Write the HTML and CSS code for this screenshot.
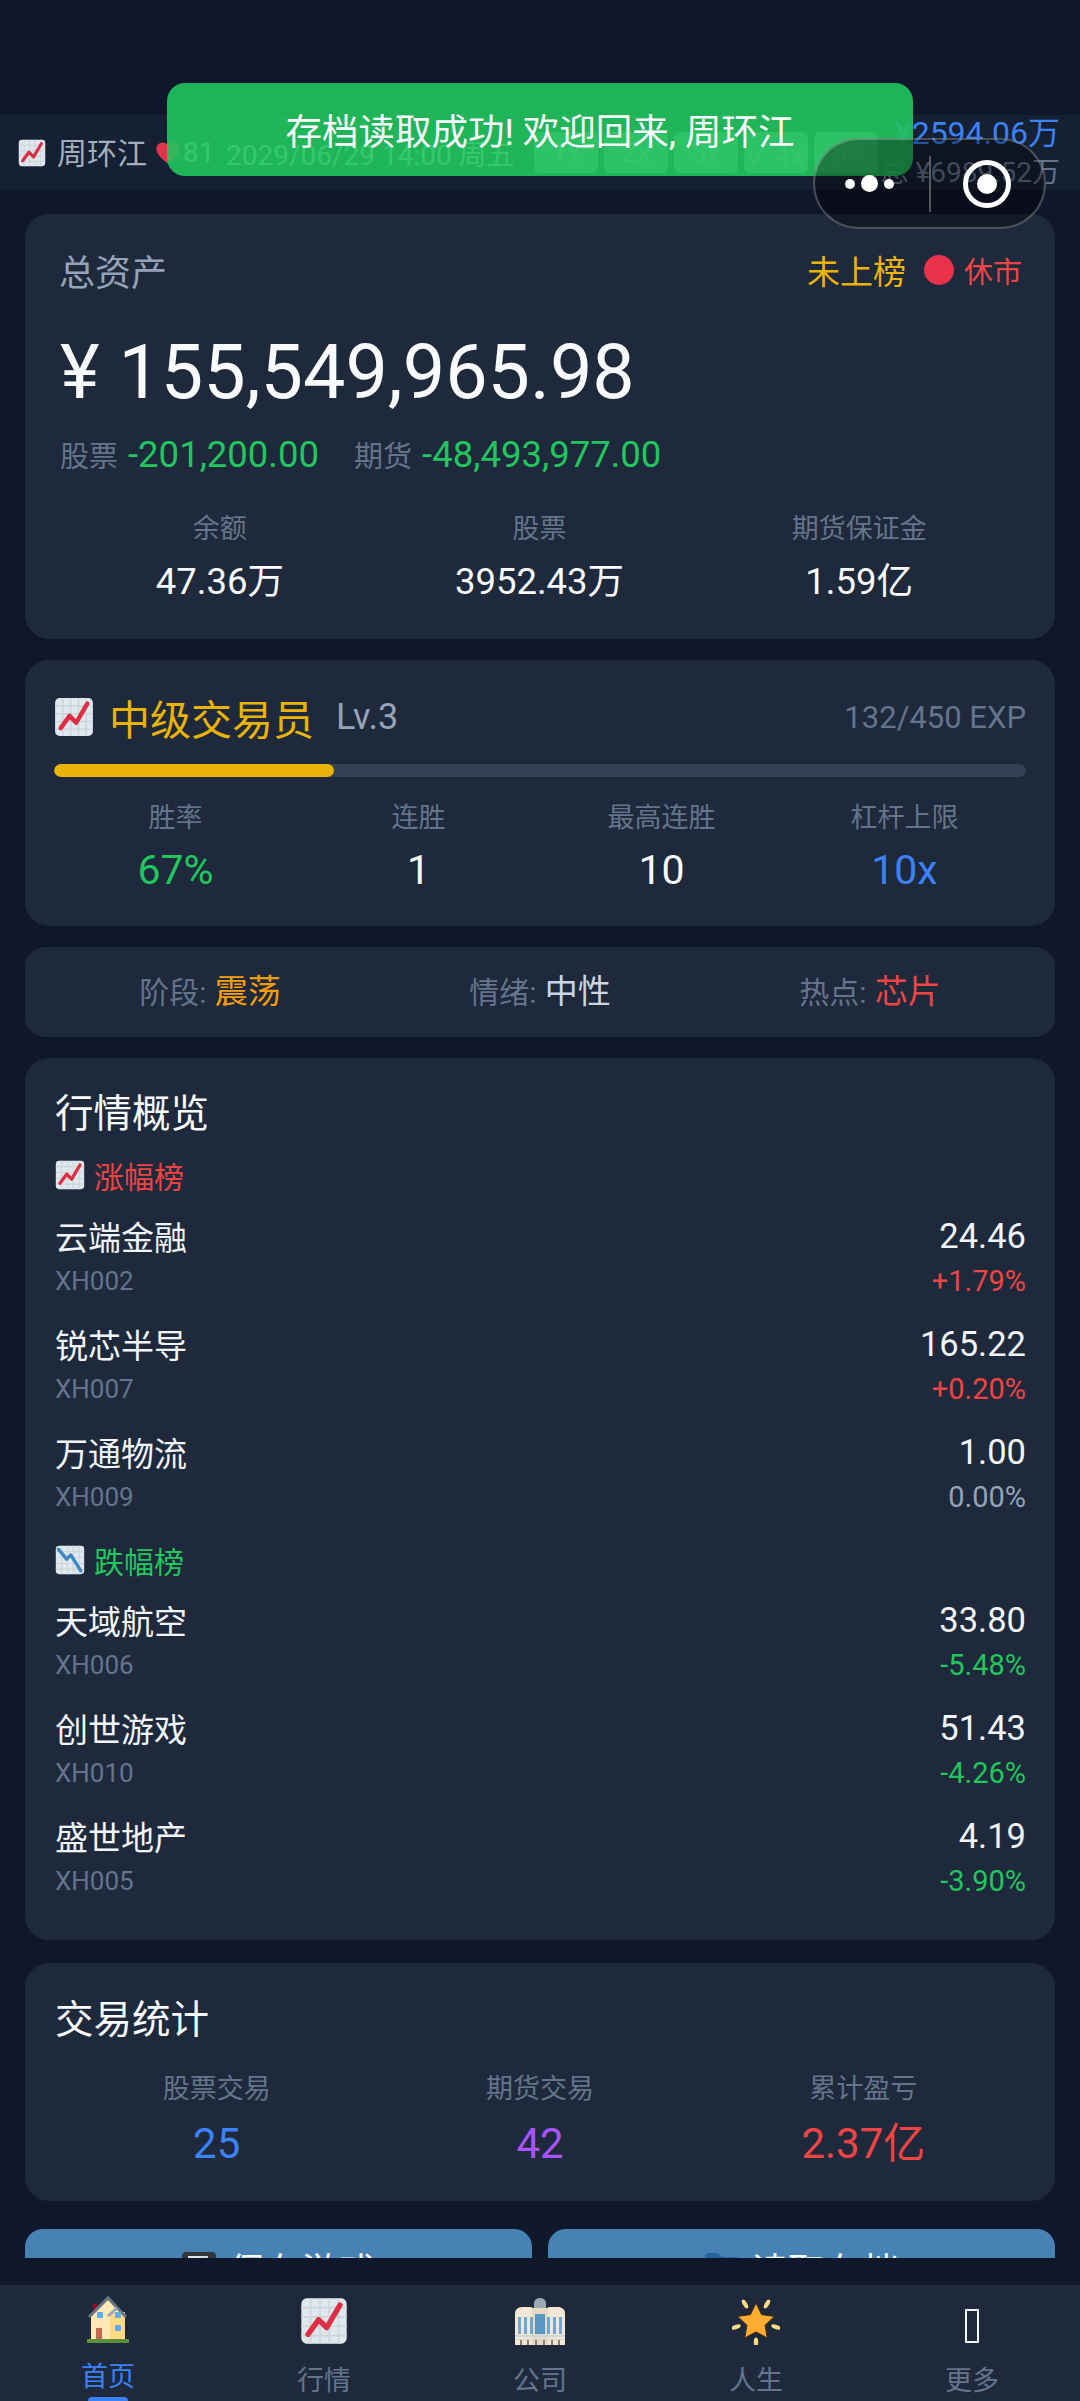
FILE: index.html
```html
<!DOCTYPE html>
<html lang="zh-CN">
<head>
<meta charset="utf-8">
<title>交易游戏</title>
<link rel="stylesheet" href="styles.css">
</head>
<body>
<svg class="defs" width="0" height="0" aria-hidden="true">
  <defs>
    <symbol id="up" viewBox="0 0 36 36">
      <rect x="1" y="1" width="34" height="34" rx="4" fill="#e1e8ed"/>
      <path d="M8 1v34M15 1v34M22 1v34M29 1v34M1 8h34M1 15h34M1 22h34M1 29h34" stroke="#ccd6dd" stroke-width="1.4"/>
      <path d="M6 28 L14 17 L20 23 L30 6" fill="none" stroke="#dd2e44" stroke-width="4" stroke-linecap="round" stroke-linejoin="round"/>
    </symbol>
    <symbol id="down" viewBox="0 0 36 36">
      <rect x="1" y="1" width="34" height="34" rx="4" fill="#e1e8ed"/>
      <path d="M8 1v34M15 1v34M22 1v34M29 1v34M1 8h34M1 15h34M1 22h34M1 29h34" stroke="#ccd6dd" stroke-width="1.4"/>
      <path d="M4 5 L14 17 L19 12 L31 31" fill="none" stroke="#3b88c3" stroke-width="4" stroke-linecap="round" stroke-linejoin="round"/>
    </symbol>
  </defs>
</svg>
<div class="app">
  <header class="topbar">
    <svg class="top-icon"><use href="#up"/></svg>
    <span class="player">周环江</span>
    <svg class="heart" viewBox="0 0 36 36"><path d="M18 33C8 25 2 19 2 11.500A8.500 8.500 0 0 1 18 8a8.500 8.500 0 0 1 16 3.500C34 19 28 25 18 33z" fill="#e8324a"/></svg>
    <span class="hp">81</span>
    <span class="date">2029/06/29 14:00 周五</span>
    <div class="speeds">
      <span class="speed">1x</span><span class="speed">2x</span><span class="speed">3x</span><span class="speed">✓ 4x</span><span class="speed">5x</span>
    </div>
    <div class="wealth">
      <span class="wealth-cash">¥2594.06万</span>
      <span class="wealth-total">总 ¥6989.52万</span>
    </div>
  </header>

  <main class="content">
    <section class="card card-assets">
      <div class="assets-head">
        <span class="assets-label">总资产</span>
        <div class="assets-status">
          <span class="rank">未上榜</span>
          <span class="dot"></span>
          <span class="closed">休市</span>
        </div>
      </div>
      <div class="assets-total">¥ 155,549,965.98</div>
      <div class="assets-sub">
        <span class="sub-label">股票</span><span class="green sub-val">-201,200.00</span>
        <span class="sub-label sub-second">期货</span><span class="green sub-val">-48,493,977.00</span>
      </div>
      <div class="grid-3 assets-stats">
        <div class="stat"><div class="stat-label">余额</div><div class="stat-value">47.36万</div></div>
        <div class="stat"><div class="stat-label">股票</div><div class="stat-value">3952.43万</div></div>
        <div class="stat"><div class="stat-label">期货保证金</div><div class="stat-value">1.59亿</div></div>
      </div>
    </section>

    <section class="card card-level">
      <div class="level-head">
        <svg class="level-icon"><use href="#up"/></svg>
        <span class="level-name">中级交易员</span>
        <span class="level-no">Lv.3</span>
        <span class="level-exp">132/450 EXP</span>
      </div>
      <div class="bar"><div class="bar-fill" style="width:28.8%"></div></div>
      <div class="grid-4 level-stats">
        <div class="stat"><div class="stat-label">胜率</div><div class="level-value value-green">67%</div></div>
        <div class="stat"><div class="stat-label">连胜</div><div class="level-value">1</div></div>
        <div class="stat"><div class="stat-label">最高连胜</div><div class="level-value">10</div></div>
        <div class="stat"><div class="stat-label">杠杆上限</div><div class="level-value value-blue">10x</div></div>
      </div>
    </section>

    <section class="card card-mood">
      <div class="mood"><span class="mood-label">阶段:</span> <span class="orange">震荡</span></div>
      <div class="mood"><span class="mood-label">情绪:</span> <span class="light">中性</span></div>
      <div class="mood"><span class="mood-label">热点:</span> <span class="red">芯片</span></div>
    </section>

    <section class="card card-market">
      <h2 class="card-title">行情概览</h2>
      <div class="list-head red"><svg class="list-icon"><use href="#up"/></svg>涨幅榜</div>
      <div class="rows">
        <div class="row"><div class="row-line"><span class="name">云端金融</span><span class="price">24.46</span></div><div class="row-sub"><span class="code">XH002</span><span class="red">+1.79%</span></div></div>
        <div class="row"><div class="row-line"><span class="name">锐芯半导</span><span class="price">165.22</span></div><div class="row-sub"><span class="code">XH007</span><span class="red">+0.20%</span></div></div>
        <div class="row"><div class="row-line"><span class="name">万通物流</span><span class="price">1.00</span></div><div class="row-sub"><span class="code">XH009</span><span class="muted">0.00%</span></div></div>
      </div>
      <div class="list-head list-head-second green"><svg class="list-icon"><use href="#down"/></svg>跌幅榜</div>
      <div class="rows rows-second">
        <div class="row"><div class="row-line"><span class="name">天域航空</span><span class="price">33.80</span></div><div class="row-sub"><span class="code">XH006</span><span class="green">-5.48%</span></div></div>
        <div class="row"><div class="row-line"><span class="name">创世游戏</span><span class="price">51.43</span></div><div class="row-sub"><span class="code">XH010</span><span class="green">-4.26%</span></div></div>
        <div class="row"><div class="row-line"><span class="name">盛世地产</span><span class="price">4.19</span></div><div class="row-sub"><span class="code">XH005</span><span class="green">-3.90%</span></div></div>
      </div>
    </section>

    <section class="card card-trades">
      <h2 class="card-title">交易统计</h2>
      <div class="grid-3 trade-stats">
        <div class="stat"><div class="stat-label">股票交易</div><div class="trade-value blue">25</div></div>
        <div class="stat"><div class="stat-label">期货交易</div><div class="trade-value purple">42</div></div>
        <div class="stat"><div class="stat-label">累计盈亏</div><div class="trade-value red">2.37亿</div></div>
      </div>
    </section>

    <div class="actions">
      <button class="action">
        <svg class="action-icon" viewBox="0 0 36 36"><rect x="1" y="1" width="34" height="34" rx="4" fill="#31373d"/><rect x="7" y="5" width="20" height="26" fill="#e1e8ed"/><rect x="20" y="5" width="7" height="26" fill="#ccd6dd"/></svg>
        保存游戏
      </button>
      <button class="action">
        <svg class="action-icon" viewBox="0 0 36 36"><path d="M1 6a4 4 0 0 1 4-4h9l4 4h14a4 4 0 0 1 4 4v22H1z" fill="#226699"/></svg>
        读取存档
      </button>
    </div>
  </main>

  <nav class="tabbar">
    <a class="tab tab-active">
      <svg class="tab-icon" viewBox="0 0 44 48">
        <path d="M7 9h4v6H7z" fill="#a0041e"/>
        <path d="M5 20 22 4l17 16v24H5z" fill="#ffe8b6"/>
        <path d="M24 17h15v27H24z" fill="#ffd983"/>
        <path d="M3 22 22 3l18 19" fill="none" stroke="#66757f" stroke-width="3"/>
        <path d="M22 21l9-8" fill="none" stroke="#99aab5" stroke-width="3"/>
        <path d="M11 17h6v6h-6zM29 17h6v6h-6zM29 30h6v6h-6z" fill="#5dadec"/>
        <path d="M10 33h6v11h-6z" fill="#c1694f"/>
        <path d="M1 44h42v4H1z" fill="#5c913b"/>
      </svg>
      <span>首页</span>
      <i class="tab-mark"></i>
    </a>
    <a class="tab">
      <svg class="tab-icon"><use href="#up"/></svg>
      <span>行情</span>
    </a>
    <a class="tab">
      <svg class="tab-icon tab-icon-office" viewBox="0 0 52 48">
        <path d="M20 6a6 5 0 0 1 12 0v8H20z" fill="#99aab5"/>
        <path d="M1 16a7 6 0 0 1 7-6h8a6 6 0 0 1 6 6v32H1z" fill="#f4e7d3"/>
        <path d="M30 16a6 6 0 0 1 6-6h9a7 6 0 0 1 6 6v32H30z" fill="#f4e7d3"/>
        <path d="M18 11h16v37H18z" fill="#e6d9c4"/>
        <path d="M4 20h3v17H4zM10 20h3v17h-3zM16 20h3v17h-3zM33 20h3v17h-3zM39 20h3v17h-3zM45 20h3v17h-3z" fill="#6ea8d8"/>
        <path d="M21 17h10v20H21z" fill="#5b97c6"/>
        <path d="M1 38h50v2H1zM1 42h50v1H1z" fill="#ccd6dd"/>
        <path d="M6 43h2v5H6zM13 43h2v5h-2zM21 43h2v5h-2zM29 43h2v5h-2zM37 43h2v5h-2zM44 43h2v5h-2z" fill="#8a8271"/>
      </svg>
      <span>公司</span>
    </a>
    <a class="tab">
      <svg class="tab-icon" viewBox="0 0 48 48">
        <path d="M24 6l5.600 11.600 12.800 1.800-9.300 8.900 2.200 12.700L24 34.900l-11.300 6.100 2.200-12.700-9.300-8.900 12.800-1.800z" fill="#ffac33" stroke="#3b2a12" stroke-width="1" stroke-linejoin="round"/>
        <g fill="#ffd983">
          <ellipse cx="13" cy="7" rx="2.200" ry="5" transform="rotate(-30 13 7)"/>
          <ellipse cx="35" cy="7" rx="2.200" ry="5" transform="rotate(30 35 7)"/>
          <ellipse cx="4" cy="30" rx="5" ry="2.200" transform="rotate(-20 4 30)"/>
          <ellipse cx="44" cy="30" rx="5" ry="2.200" transform="rotate(20 44 30)"/>
          <ellipse cx="24" cy="45" rx="2.200" ry="4.500"/>
        </g>
      </svg>
      <span>人生</span>
    </a>
    <a class="tab">
      <span class="tab-tofu-wrap"><i class="tab-tofu"></i></span>
      <span>更多</span>
    </a>
  </nav>

  <div class="toast">存档读取成功! 欢迎回来, 周环江</div>

  <div class="capsule">
    <div class="capsule-dots"><i class="cdot"></i><i class="cdot cdot-big"></i><i class="cdot"></i></div>
    <i class="capsule-sep"></i>
    <div class="capsule-target"><i class="target-core"></i></div>
  </div>
</div>
</body>
</html>
```

FILE: styles.css
```css
* { box-sizing: border-box; }
html, body { margin: 0; padding: 0; }
body {
  background: #0f172a;
  color: #f1f5f9;
  font-family: Roboto, "Noto Sans CJK SC", sans-serif;
  font-weight: 400;
}
.defs { position: absolute; }
.app {
  position: relative;
  width: 1080px;
  height: 2401px;
  display: flex;
  flex-direction: column;
  overflow: hidden;
  padding-top: 115px;
}
.green { color: #22c55e; }
.red { color: #ef4444; }
.blue { color: #3b82f6; }
.purple { color: #a855f7; }
.orange { color: #f59e0b; }
.light { color: #cbd5e1; }
.muted { color: #94a3b8; }

/* top bar */
.topbar {
  height: 75px;
  flex: none;
  background: #1e293b80;
  display: flex;
  align-items: center;
  padding: 0 20px 0 18px;
  font-size: 28px;
  color: #e2e8f0;
}
.top-icon { width: 28px; height: 30px; margin-right: 11px; flex: none; }
.player { font-size: 30px; width: 90px; color: #a3aebd; padding-bottom: 4px; }
.heart { width: 26px; height: 26px; margin-left: 8px; margin-right: 2px; flex: none; }
.hp { width: 43px; }
.date { width: 308px; white-space: nowrap; }
.speeds { display: flex; gap: 6px; }
.speed {
  width: 64px;
  height: 41px;
  border-radius: 6px;
  background: #94a3b8;
  color: #cbd5e1;
  display: flex;
  align-items: center;
  justify-content: center;
  white-space: nowrap;
}
.wealth {
  margin-left: auto;
  display: flex;
  flex-direction: column;
  align-items: flex-end;
  line-height: 40px;
  white-space: nowrap;
}
.wealth-cash { color: #3b82f6; font-size: 32px; }
.wealth-total { font-size: 28px; color: #64748b; }

/* main */
.content {
  height: 2068px;
  flex: none;
  overflow: hidden;
  padding: 24px 25px 0;
  display: flex;
  flex-direction: column;
  gap: 21px;
}
.card {
  flex: none;
  background: #1e293b;
  border-radius: 24px;
}
.stat { text-align: center; }
.stat-label { font-size: 27px; line-height: 36px; color: #64748b; }
.grid-3 { display: grid; grid-template-columns: repeat(3, 1fr); }
.grid-4 { display: grid; grid-template-columns: repeat(4, 1fr); }

/* assets */
.card-assets { padding: 39px 33px 35px 35px; }
.assets-head { display: flex; justify-content: space-between; align-items: center; height: 40px; padding-bottom: 6px; }
.assets-label { font-size: 36px; color: #94a3b8; margin-left: -1px; }
.assets-status { display: flex; align-items: center; }
.rank { font-size: 33px; color: #eab308; margin-right: 18px; }
.dot { width: 30px; height: 30px; border-radius: 50%; background: #e8324a; margin-right: 10px; }
.closed { font-size: 29px; color: #ef4444; }
.assets-total { font-size: 75.5px; line-height: 90px; margin-top: 34px; color: #f8fafc; }
.assets-sub { font-size: 36.5px; line-height: 40px; margin-top: 18px; white-space: nowrap; }
.sub-label { font-size: 29px; color: #64748b; margin-right: 10px; }
.sub-second { margin-left: 26px; }
.assets-stats { margin-top: 34px; margin-right: 3px; }
.stat-value { font-size: 36.5px; line-height: 44px; margin-top: 13px; color: #f8fafc; }

/* level */
.card-level { padding: 34px 29px 33px; }
.level-head { display: flex; align-items: center; height: 50px; padding-bottom: 4px; }
.level-icon { width: 40px; height: 40px; margin-right: 15px; flex: none; }
.level-name { font-size: 41px; color: #eab308; margin-right: 22px; }
.level-no { font-size: 36px; color: #94a3b8; }
.level-exp { margin-left: auto; font-size: 31px; color: #64748b; }
.bar { height: 13px; margin-top: 20px; border-radius: 7px; background: #334155; overflow: hidden; }
.bar-fill { height: 100%; background: #eab308; border-radius: 7px; }
.level-stats { margin-top: 23px; }
.level-value { font-size: 41px; line-height: 46px; margin-top: 11px; color: #f8fafc; }
.level-value.value-green { color: #22c55e; }
.level-value.value-blue { color: #3b82f6; }

/* mood */
.card-mood {
  height: 90px;
  padding: 0 20px 6px;
  display: grid;
  grid-template-columns: repeat(3, 1fr);
  align-items: center;
  border-radius: 20px;
}
.mood { text-align: center; font-size: 33px; }
.mood-label { font-size: 30px; color: #64748b; }

/* market */
.card-title { margin: 0; font-size: 38.5px; line-height: 50px; font-weight: 400; color: #f8fafc; }
.card-market { padding: 31px 29px 41px 30px; }
.list-head {
  display: flex;
  align-items: center;
  height: 40px;
  padding-bottom: 5px;
  margin-top: 18px;
  font-size: 30px;
}
.list-head-second { margin-top: 27px; }
.list-icon { width: 30px; height: 30px; margin-right: 9px; flex: none; }
.rows { margin-top: 22px; display: flex; flex-direction: column; gap: 28px; }
.rows-second { margin-top: 21px; }
.row-line { display: flex; justify-content: space-between; align-items: center; height: 40px; padding-bottom: 6px; }
.row-sub { display: flex; justify-content: space-between; align-items: center; height: 36px; margin-top: 4px; font-size: 29px; }
.name { font-size: 33px; color: #f1f5f9; }
.price { font-size: 34.5px; color: #f1f5f9; }
.code { color: #64748b; font-size: 26px; }

/* trades */
.card-trades { padding: 32px 30px; margin-top: 2px; }
.trade-stats { margin-top: 26px; }
.trade-value { font-size: 42px; line-height: 50px; margin-top: 12px; }

/* actions */
.actions { display: grid; grid-template-columns: 1fr 1fr; gap: 16px; margin-top: 7px; }
.action {
  height: 80px;
  border: 0;
  border-radius: 18px;
  background: #4682b4;
  color: #f8fafc;
  font: inherit;
  font-size: 37px;
  display: flex;
  align-items: center;
  justify-content: center;
  gap: 11px;
}
.action-icon { width: 36px; height: 36px; flex: none; }

/* tab bar */
.tabbar {
  margin-top: 27px;
  flex: 1;
  background: #1e293b;
  display: grid;
  grid-template-columns: repeat(5, 1fr);
}
.tab {
  position: relative;
  display: flex;
  flex-direction: column;
  align-items: center;
  padding-top: 12px;
  font-size: 27px;
  line-height: 36px;
  color: #64748b;
}
.tab-icon { width: 48px; height: 48px; margin-bottom: 18px; flex: none; }
.tab-icon-office { width: 52px; }
.tab-active { color: #3b82f6; padding-top: 10px; }
.tab-active .tab-icon { margin-bottom: 16px; }
.tab-mark {
  position: absolute;
  left: 88px;
  bottom: 0;
  width: 40px;
  height: 4px;
  background: #3b82f6;
  border-radius: 4px 4px 0 0;
}
.tab-tofu-wrap { height: 48px; margin-bottom: 18px; display: flex; align-items: center; padding-top: 9px; }
.tab-tofu { display: block; width: 14px; height: 34px; border: 2px solid #f1f5f9; }

/* overlays */
.toast {
  position: absolute;
  left: 167px;
  top: 83px;
  width: 746px;
  height: 93px;
  border-radius: 18px;
  background: rgba(34, 197, 94, 0.9);
  color: #f8fafc;
  font-size: 36.5px;
  display: flex;
  align-items: center;
  justify-content: center;
}
.capsule {
  position: absolute;
  left: 813px;
  top: 138px;
  width: 233px;
  height: 91px;
  border-radius: 46px;
  border: 2px solid rgba(255, 255, 255, 0.25);
  background: rgba(0, 0, 0, 0.36);
  display: flex;
  align-items: center;
}
.capsule-dots { width: 114px; padding-left: 30px; display: flex; align-items: center; gap: 6px; }
.cdot { width: 10px; height: 10px; border-radius: 50%; background: #fff; }
.cdot-big { width: 17px; height: 17px; }
.capsule-sep { width: 2px; height: 56px; background: rgba(255, 255, 255, 0.3); }
.capsule-target {
  width: 48px;
  height: 48px;
  margin-left: 32px;
  border: 5px solid #fff;
  border-radius: 50%;
  display: flex;
  align-items: center;
  justify-content: center;
}
.target-core { width: 20px; height: 20px; background: #fff; border-radius: 50%; }
```
